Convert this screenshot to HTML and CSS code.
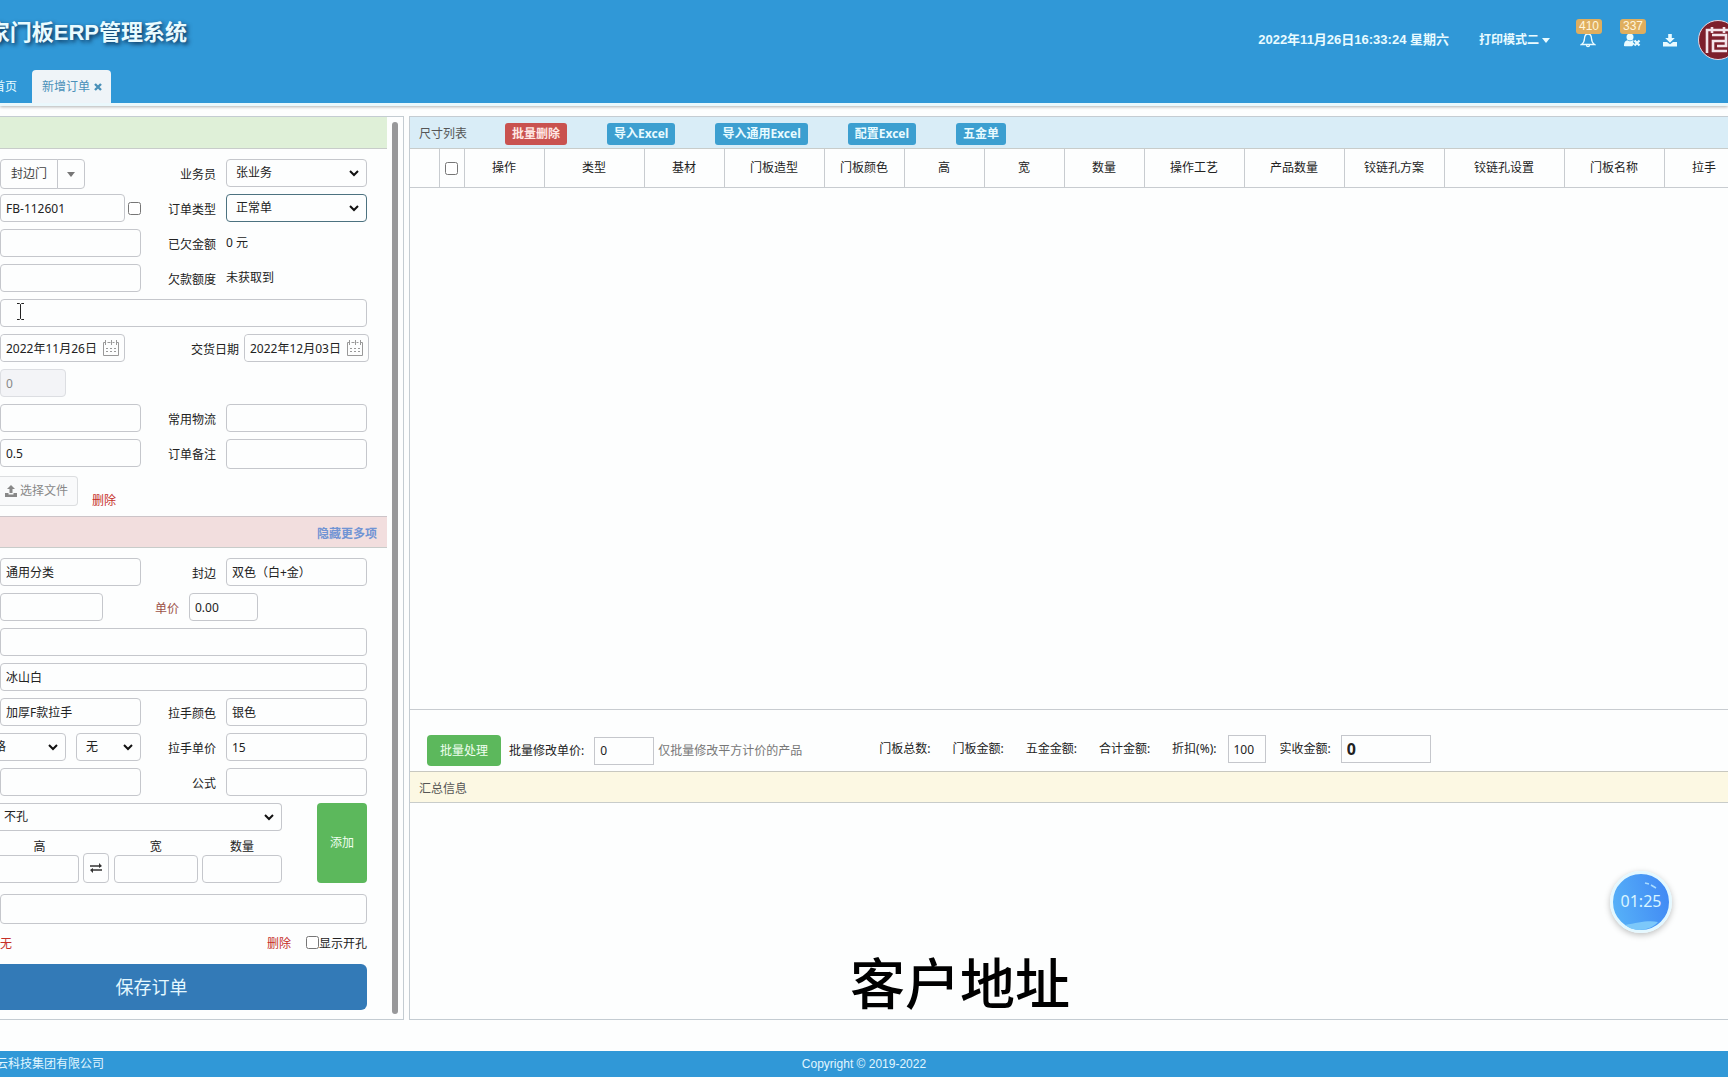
FILE: index.html
```html
<!DOCTYPE html>
<html lang="zh-CN">
<head>
<meta charset="utf-8">
<title>门板ERP管理系统</title>
<meta name="viewport" content="width=device-width, initial-scale=1">
<link rel="stylesheet" href="styles.css">
</head>
<body>
<header class="topbar">
  <div class="topbar-row">
    <h1 class="brand">家门板ERP管理系统</h1>
    <div class="status">
      <span class="clock">2022年11月26日16:33:24 星期六</span>
      <button class="print-mode" type="button">打印模式二<span class="caret"></span></button>
      <div class="tools">
        <button class="tool" type="button" aria-label="通知">
          <svg width="16" height="16" viewBox="0 0 16 16" fill="none" stroke="currentColor" stroke-width="1.3"><path d="M8 2C5.400 2 4.600 4 4.500 6.500C4.400 9.500 3.500 11 1.500 12.500H14.500C12.500 11 11.600 9.500 11.500 6.500C11.400 4 10.600 2 8 2ZM8 .5V2M6.500 13C6.500 15.200 9.500 15.200 9.500 13"/></svg>
          <span class="badge">410</span>
        </button>
        <button class="tool" type="button" aria-label="客户">
          <svg width="17" height="16" viewBox="0 0 17 16" fill="currentColor"><circle cx="6" cy="5" r="3.500"/><path d="M0 14C0 10 1.500 8.500 3.500 8.200C5 9.500 7 9.500 8.500 8.200L10 8.800L8.700 10L10.500 11.800L8 14.300H1Z"/><path d="M10.500 8.500L15.500 13.500M15.500 8.500L10.500 13.500" stroke="currentColor" stroke-width="2.200"/></svg>
          <span class="badge">337</span>
        </button>
        <button class="tool" type="button" aria-label="下载">
          <svg width="16" height="16" viewBox="0 0 16 16" fill="currentColor"><path d="M6.200 2H9.800V6H12.800L8 10.700L3.200 6H6.200Z"/><path d="M1 10H5L8 12.300L11 10H15V14.500H1Z"/></svg>
        </button>
      </div>
      <a class="avatar" href="#" aria-label="个人中心">
        <svg width="40" height="40" viewBox="0 0 40 40"><circle cx="20" cy="20" r="19.500" fill="#7d1f2c" stroke="#e6d8e4"/><g fill="none" stroke="#f3e4ea" stroke-width="2.600"><path d="M9 33V10H33V33M14 7V13M26 7V13M14 15H28V21H15V31H29M19 26H28V21"/></g></svg>
      </a>
    </div>
  </div>
  <nav class="tabs">
    <a class="tab tab-home" href="#">首页</a>
    <a class="tab tab-active" href="#">新增订单<svg width="8" height="8" viewBox="0 0 8 8"><path d="M1 1L7 7M7 1L1 7" stroke="currentColor" stroke-width="2.400"/></svg></a>
  </nav>
</header>

<main class="workspace">
  <section class="panel order-panel">
    <div class="order-body">
      <div class="bar bar-green"></div>
      <form class="form">
        <div class="row">
          <div class="main-field split"><button type="button">封边门</button><button class="split-more" type="button" aria-label="更多"><span class="caret"></span></button></div>
          <label class="label" for="sales">业务员</label>
          <select class="field" id="sales"><option>张业务</option></select>
        </div>
        <div class="row">
          <div class="main-field pair"><input class="w-date" aria-label="订单编号" value="FB-112601"><input type="checkbox" aria-label="手动编号"></div>
          <label class="label" for="kind">订单类型</label>
          <select class="field focused" id="kind"><option>正常单</option></select>
        </div>
        <div class="row">
          <input class="main-field" aria-label="客户名称">
          <span class="label">已欠金额</span><span class="value">0 元</span>
        </div>
        <div class="row">
          <input class="main-field" aria-label="客户电话">
          <span class="label">欠款额度</span><span class="value">未获取到</span>
        </div>
        <div class="row address">
          <input class="wide" aria-label="客户地址">
          <svg class="ibeam" width="9" height="17" viewBox="0 0 9 17" fill="none" stroke="#222"><path d="M1 .5H3.500L4.500 1.500L5.500 .5H8M4.500 1.500V15.500M1 16.500H3.500L4.500 15.500L5.500 16.500H8"/></svg>
        </div>
        <div class="row row-dates">
          <div class="date"><input aria-label="下单日期" value="2022年11月26日"><svg width="16" height="16" viewBox="0 0 16 16" fill="none" stroke="#999"><path d="M2.500 2.500H.5V15.500H15.500V2.500H13.500M4.500 2.500H7.500M9.500 2.500H11.500M2.500 0V5M8.500 0V5M13.500 0V5M3 8.500H5M7 8.500H9M11 8.500H13M3 11.500H5M7 11.500H9M11 11.500H13"/></svg></div>
          <label class="label" for="due">交货日期</label>
          <div class="date"><input id="due" value="2022年12月03日"><svg width="16" height="16" viewBox="0 0 16 16" fill="none" stroke="#999"><path d="M2.500 2.500H.5V15.500H15.500V2.500H13.500M4.500 2.500H7.500M9.500 2.500H11.500M2.500 0V5M8.500 0V5M13.500 0V5M3 8.500H5M7 8.500H9M11 8.500H13M3 11.500H5M7 11.500H9M11 11.500H13"/></svg></div>
        </div>
        <div class="row"><input class="w-small" aria-label="定金" value="0" disabled></div>
        <div class="row">
          <input class="main-field" aria-label="收货人">
          <label class="label" for="ship">常用物流</label><input class="field" id="ship">
        </div>
        <div class="row">
          <input class="main-field" aria-label="系数" value="0.5">
          <label class="label" for="note">订单备注</label><textarea class="field" id="note"></textarea>
        </div>
        <div class="row row-file">
          <button class="file" type="button"><svg width="12" height="12" viewBox="0 0 12 12" fill="currentColor"><path d="M6 0L10 4H7.500V8H4.500V4H2Z"/><path d="M0 8H3.500V9.500H8.500V8H12V12H0Z"/></svg>选择文件</button>
          <a class="danger" href="#">删除</a>
        </div>
      </form>
      <div class="bar bar-pink"><a href="#">隐藏更多项</a></div>
      <form class="form form-item">
        <div class="row">
          <input class="main-field" aria-label="分类" value="通用分类">
          <label class="label" for="edge">封边</label><input class="field" id="edge" value="双色（白+金）">
        </div>
        <div class="row">
          <input class="w-style" aria-label="造型">
          <label class="label label-price" for="price">单价</label><input class="w-price" id="price" value="0.00">
        </div>
        <div class="row"><input class="wide" aria-label="基材"></div>
        <div class="row"><input class="wide" aria-label="颜色" value="冰山白"></div>
        <div class="row">
          <input class="main-field" aria-label="拉手" value="加厚F款拉手">
          <label class="label" for="hcolor">拉手颜色</label><input class="field" id="hcolor" value="银色">
        </div>
        <div class="row">
          <div class="main-field spread">
            <div class="clip"><select class="spec" aria-label="规格"><option>规格</option></select></div>
            <select class="w-none" aria-label="方向"><option>无</option></select>
          </div>
          <label class="label" for="hprice">拉手单价</label><input class="field" id="hprice" value="15">
        </div>
        <div class="row">
          <input class="main-field" aria-label="工艺">
          <label class="label" for="formula">公式</label><input class="field" id="formula">
        </div>
        <div class="size-block">
          <div class="size-left">
            <select class="hole" aria-label="铰链孔"><option>不孔</option></select>
            <div class="sizes">
              <label class="size size-h">高<input class="open-left"></label>
              <button class="swap" type="button" aria-label="交换高宽"><svg width="12" height="10" viewBox="0 0 12 10" fill="none" stroke="#333" stroke-width="1.500"><path d="M0 3H11M1 7H12"/><path d="M9 0L12 3L9 5ZM3 5L0 7L3 10Z" fill="#333" stroke="none"/></svg></button>
              <label class="size size-w">宽<input></label>
              <label class="size size-n">数量<input></label>
            </div>
          </div>
          <button class="btn add" type="button">添加</button>
        </div>
        <textarea class="wide remark" aria-label="备注"></textarea>
        <div class="row row-end">
          <span class="danger">无</span>
          <span class="row-actions"><a class="danger" href="#">删除</a><label class="check"><input type="checkbox">显示开孔</label></span>
        </div>
        <button class="save" type="button">保存订单</button>
      </form>
    </div>
    <div class="scroll"><div class="thumb"></div></div>
  </section>

  <section class="panel list-panel">
    <div class="bar bar-blue">
      <span class="bar-title">尺寸列表</span>
      <button class="btn mini red" type="button">批量删除</button>
      <button class="btn mini blue" type="button">导入Excel</button>
      <button class="btn mini blue" type="button">导入通用Excel</button>
      <button class="btn mini blue" type="button">配置Excel</button>
      <button class="btn mini blue" type="button">五金单</button>
    </div>
    <div class="table-area">
      <table>
        <colgroup><col class="c-num"><col class="c-check"><col class="c80"><col class="c100"><col class="c80"><col class="c100"><col class="c80"><col class="c80"><col class="c80"><col class="c80"><col class="c100"><col class="c100"><col class="c100"><col class="c120"><col class="c100"><col class="c80"></colgroup>
        <thead><tr><th></th><th><input type="checkbox" aria-label="全选"></th><th>操作</th><th>类型</th><th>基材</th><th>门板造型</th><th>门板颜色</th><th>高</th><th>宽</th><th>数量</th><th>操作工艺</th><th>产品数量</th><th>铰链孔方案</th><th>铰链孔设置</th><th>门板名称</th><th>拉手</th></tr></thead>
      </table>
    </div>
    <div class="totals">
      <div class="batch">
        <button class="btn batch-btn" type="button">批量处理</button>
        <label class="batch-label" for="batch">批量修改单价:</label>
        <input class="square" id="batch" value="0">
        <span class="hint">仅批量修改平方计价的产品</span>
      </div>
      <div class="sums">
        <span>门板总数:</span><span>门板金额:</span><span>五金金额:</span><span>合计金额:</span>
        <label class="sum">折扣(%):<input class="square discount" value="100"></label>
        <label class="sum paid-label">实收金额:<input class="square paid" value="0"></label>
      </div>
    </div>
    <div class="bar bar-yellow"><span class="bar-title">汇总信息</span></div>
    <div class="summary"></div>
    <div class="caption">客户地址</div>
    <div class="timer"><svg width="56" height="56" viewBox="0 0 56 56"><path d="M12 51C25 49 34 46 45 48C36 58 20 58 12 51Z" fill="#7cc8fa"/><path d="M32 9L36 10M38 11L43 14" stroke="#a9dcff" stroke-width="1.500"/></svg><span>01:25</span></div>
  </section>
</main>

<footer class="footer">
  <span class="company">云科技集团有限公司</span>
  <span>Copyright © 2019-2022</span>
</footer>
</body>
</html>
```
FILE: styles.css
```css
* { box-sizing: border-box; }

body {
  margin: 0;
  min-height: 100vh;
  display: flex;
  flex-direction: column;
  overflow-x: hidden;
  background: #fdfefe;
  color: #222;
  font: 12px/16px "Noto Sans", "Noto Sans CJK SC", sans-serif;
}

button, input, select, textarea { font: inherit; color: inherit; }
button { cursor: pointer; }
a { text-decoration: none; color: inherit; }

input, select, textarea {
  height: 28px;
  margin: 0;
  padding: 0 5px;
  border: 1px solid #c5c7cc;
  border-radius: 4px;
  background: #fdfefe;
}
textarea { display: block; resize: none; }
input[type="checkbox"] { width: 13px; height: 13px; padding: 0; flex: none; }
input:disabled { background: #f3f4f7; border-color: #dcdee2; color: #888; }

/* Header */
.topbar {
  background: #3098d7;
  color: #e9fbff;
  border-bottom: 3px solid #eaf8fc;
  box-shadow: 0 1px 3px rgba(0, 0, 0, .3);
  font-family: "Liberation Sans", "Noto Sans CJK SC", sans-serif;
  overflow: hidden;
  flex: none;
}
.topbar-row { display: flex; justify-content: space-between; height: 70px; }
.brand {
  display: flex;
  justify-content: flex-end;
  width: 187px;
  margin: 0;
  padding-top: 17px;
  font-size: 22px;
  line-height: 32px;
  white-space: nowrap;
  text-shadow: 2px 2px 4px rgba(0, 20, 50, .8);
}
.status { display: flex; align-items: center; gap: 30px; height: 80px; font-weight: bold; white-space: nowrap; }
.clock { font-size: 13px; }
.print-mode { display: flex; align-items: center; gap: 3px; padding: 0; border: 0; background: none; }
.caret { border: 4px solid transparent; border-top: 5px solid currentColor; border-bottom: 0; }
.tools { display: flex; gap: 22px; }
.tool { position: relative; display: flex; justify-content: center; width: 16px; padding: 0; border: 0; background: none; }
.tool:first-child { margin-right: 6px; }
.tool svg { flex: none; }
.badge {
  position: absolute;
  left: -4px;
  top: -13px;
  width: 26px;
  border-radius: 3px;
  background: #dfae5e;
  color: #fff6dc;
  line-height: 15px;
  font-weight: normal;
}
.avatar { display: block; width: 30px; height: 40px; margin-left: -10px; overflow: hidden; }
.tabs { display: flex; height: 33px; gap: 15px; }
.tab { line-height: 34px; white-space: nowrap; }
.tab-home { display: flex; justify-content: flex-end; width: 17px; }
.tab-active {
  display: flex;
  align-items: center;
  gap: 4px;
  padding: 0 9px 0 10px;
  border-radius: 4px 4px 0 0;
  background: #eff4f8;
  color: #4a90b8;
}

/* Two panels */
.workspace { display: flex; flex: 1; gap: 5px; padding-top: 10px; }
.panel { border: 1px solid #c4ccd2; }
.order-panel { display: flex; flex: none; width: 404px; border-left: 0; }
.order-body { width: 387px; }
.scroll { flex: 1; display: flex; padding: 5px; }
.thumb { width: 6px; border-radius: 3px; background: #98989a; }
.bar { display: flex; align-items: center; height: 32px; padding-top: 3px; border-bottom: 1px solid #c8ccca; }
.bar-green { background: #dff0d8; }
.bar-pink {
  justify-content: flex-end;
  padding-right: 10px;
  border-top: 1px solid #ccc4c8;
  background: #f2dede;
  color: #7194d4;
  font-weight: bold;
}
.bar-title { color: #555; }

/* Order form */
.form { display: flex; flex-direction: column; gap: 7px; width: 367px; padding: 10px 0; }
.row { display: flex; height: 28px; }
.main-field, .field { width: 141px; flex: none; }
.label { width: 85px; padding-right: 10px; text-align: right; line-height: 31px; }
.value { line-height: 28px; }
.wide { width: 100%; }
select {
  appearance: none;
  padding: 0 20px 0 9px;
  background: #fdfefe url("data:image/svg+xml,%3Csvg xmlns='http://www.w3.org/2000/svg' width='10' height='7' viewBox='0 0 10 7'%3E%3Cpath d='M1 1L5 5L9 1' fill='none' stroke='%23111' stroke-width='2'/%3E%3C/svg%3E") no-repeat right 7px center;
}
.focused { border-color: #4c7280; }
.split { display: flex; height: 30px; }
.split button { width: 58px; padding: 0; border: 1px solid #c5c7cc; border-radius: 4px 0 0 4px; background: #fdfefe; color: #444; }
.split .split-more { display: grid; place-items: center; width: 28px; margin-left: -1px; border-radius: 0 4px 4px 0; color: #777; }
.pair { display: flex; align-items: center; gap: 3px; }
.w-date { width: 125px; }
.w-small { width: 66px; }
.w-style { width: 103px; }
.w-price { width: 69px; }
.w-none { width: 65px; }
.address { position: relative; }
.ibeam { position: absolute; left: 16px; top: 4px; }
.row-dates { justify-content: space-between; width: 369px; }
.row-dates .label { flex: 1; padding-right: 5px; }
.date {
  display: flex;
  align-items: center;
  width: 125px;
  padding-right: 5px;
  border: 1px solid #c5c7cc;
  border-radius: 4px;
}
.date input { flex: 1; min-width: 0; height: 26px; padding: 0 0 0 5px; border: 0; }
.date svg { flex: none; }
#note { height: 30px; }
.row-file { height: 32px; align-items: flex-end; gap: 14px; }
.file {
  display: flex;
  align-items: center;
  gap: 3px;
  width: 78px;
  height: 30px;
  padding: 0 5px;
  border: 1px solid #dcdee0;
  border-left: 0;
  border-radius: 0 4px 4px 0;
  background: #f9fafb;
  color: #888;
}
.danger { color: #c62f28; }
.row-file .danger { line-height: 10px; }
.label-price { width: 86px; color: #9c5248; }
.form-item { padding-bottom: 8px; }
.spread { display: flex; justify-content: space-between; }
.clip { display: flex; justify-content: flex-end; width: 66px; overflow: hidden; }
.spec { flex: none; width: 94px; }
.size-block { display: flex; justify-content: space-between; height: 84px; }
.size-left { width: 282px; }
.hole { display: block; width: 100%; padding-left: 4px; border-left: 0; border-radius: 0 4px 4px 0; }
.sizes { display: flex; align-items: flex-end; justify-content: space-between; padding-top: 8px; }
.size { display: flex; flex-direction: column; text-align: center; }
.size input { width: 100%; }
.size-h { width: 79px; }
.size-w { width: 84px; }
.size-n { width: 80px; }
.open-left { border-left: 0; border-radius: 0 4px 4px 0; }
.swap { display: grid; place-items: center; width: 26px; height: 30px; padding: 0; border: 1px solid #c5c7cc; border-radius: 4px; background: #fdfefe; }
.btn { border: 0; border-radius: 4px; background: #5cb85c; color: #f0fff0; }
.add { width: 50px; height: 80px; padding: 0; }
.remark { height: 30px; }
.row-end { justify-content: space-between; align-items: center; height: 26px; }
.row-actions { display: flex; gap: 15px; }
.check { display: flex; }
.save { height: 46px; border: 0; border-radius: 0 6px 6px 0; padding: 0 64px 0 0; background: #337ab7; color: #e4f8ff; font-size: 18px; }

/* Size list */
.list-panel { position: relative; display: flex; flex-direction: column; flex: 1; min-width: 0; border-right: 0; }
.bar-blue { padding-left: 9px; background: #d9edf7; }
.mini { height: 22px; padding: 0 7px; border-radius: 3px; font-weight: bold; line-height: 22px; white-space: nowrap; }
.mini + .mini { margin-left: 40px; }
.red { margin-left: 38px; background: #c9524f; color: #ffe8e4; }
.blue { background: #3c9fd0; color: #e8fbff; }
.table-area { flex: 1; overflow: hidden; }
table { width: 1334px; table-layout: fixed; border-collapse: collapse; }
th { height: 38px; padding: 0; border: 1px solid #c8ccd0; border-top-width: 0; font-weight: normal; text-align: center; }
th:first-child { border-left: 0; }
th input { vertical-align: middle; }
.c-num { width: 29px; }
.c-check { width: 25px; }
.c80 { width: 80px; }
.c100 { width: 100px; }
.c120 { width: 120px; }
.totals {
  display: flex;
  gap: 77px;
  height: 62px;
  padding: 25px 0 0 17px;
  border-top: 1px solid #c8ccd0;
  white-space: nowrap;
}
.batch { display: flex; align-items: center; gap: 8px; height: 31px; }
.batch-btn { width: 74px; height: 31px; padding: 0; }
.batch-label { padding-right: 2px; }
.square { border-radius: 0; }
.batch .square { width: 60px; }
.hint { color: #777; margin-left: -4px; }
.sums { display: flex; align-items: center; gap: 22px; height: 28px; }
.sum { display: flex; align-items: center; gap: 11px; }
.discount { width: 38px; }
.paid-label { margin-left: -8px; gap: 10px; }
.paid { width: 90px; font-size: 16px; font-weight: bold; }
.bar-yellow { height: 32px; padding-left: 9px; border-top: 1px solid #c8c8c0; background: #fcf8e3; }
.summary { height: 216px; }
.caption {
  position: absolute;
  left: 440px;
  bottom: 3px;
  color: #000;
  font-family: "Noto Sans CJK SC", sans-serif;
  font-size: 55px;
  font-weight: 500;
  line-height: 72px;
}
.timer {
  position: absolute;
  right: 56px;
  bottom: 86px;
  width: 62px;
  height: 62px;
  border: 3px solid #e4f8ff;
  border-radius: 50%;
  background: linear-gradient(75deg, #58b4f8, #3f86f4);
  box-shadow: 0 2px 6px rgba(0, 0, 0, .25);
  color: #d9f5ff;
}
.timer span { position: absolute; inset: 0; font-size: 16px; line-height: 54px; text-align: center; }

/* Footer */
.footer {
  display: grid;
  grid-template-columns: 1fr auto 1fr;
  align-items: center;
  height: 26px;
  margin: 31px 0 3px;
  background: #3098d7;
  color: #e0f6ff;
  font-family: "Liberation Sans", "Noto Sans CJK SC", sans-serif;
}
.company { display: flex; justify-content: flex-end; width: 104px; white-space: nowrap; }
```
